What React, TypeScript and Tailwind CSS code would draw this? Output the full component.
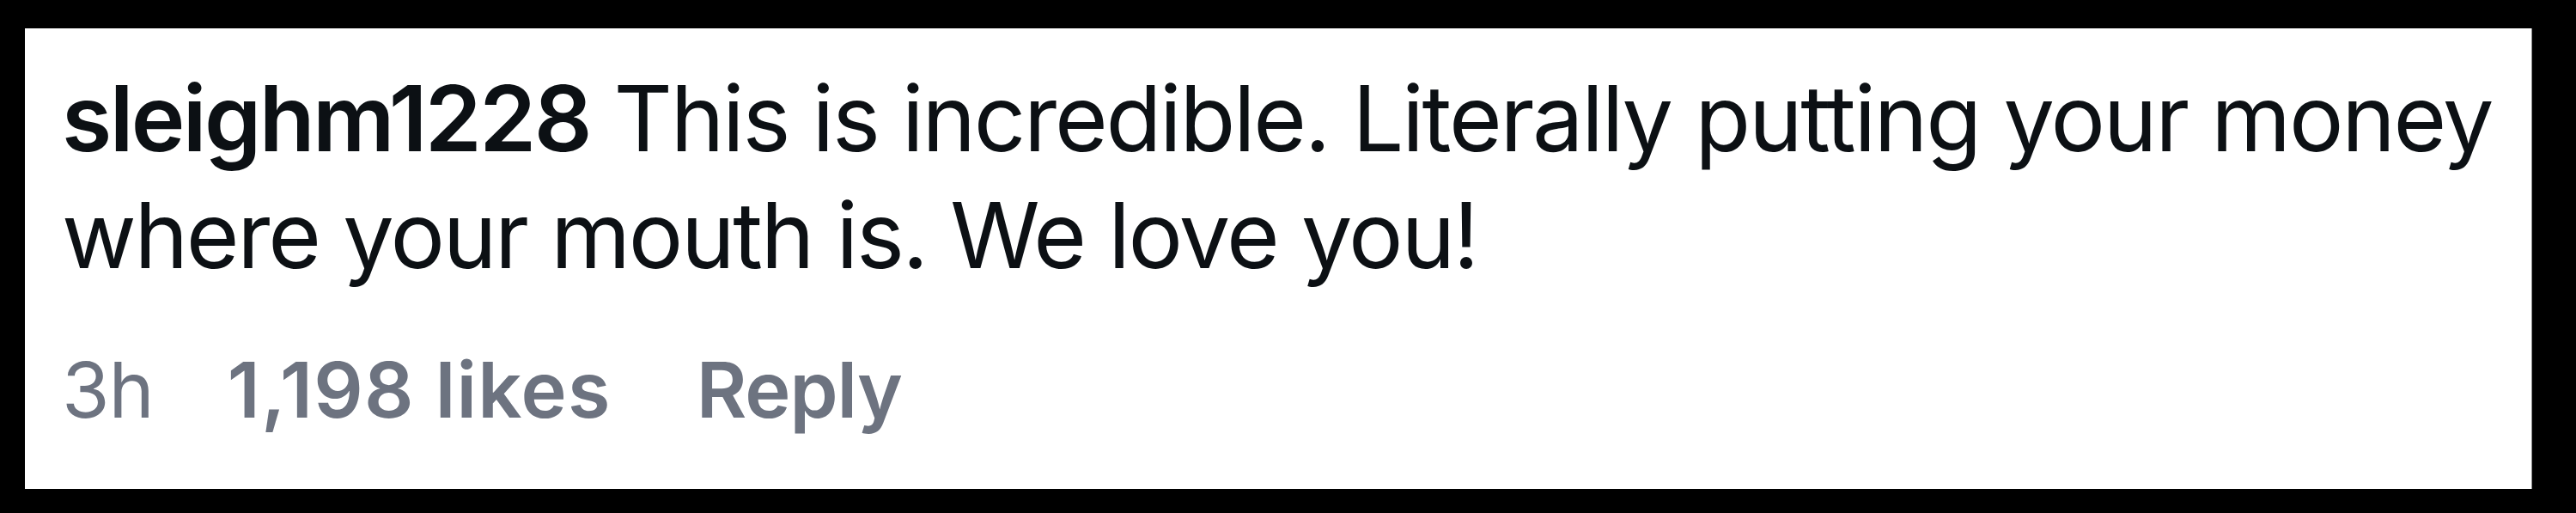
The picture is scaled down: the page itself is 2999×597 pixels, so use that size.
const App = () => {
  const comment = {
    user: 'sleighm1228',
    text: 'This is incredible. Literally putting your money where your mouth is. We love you!',
    time: '3h',
    likes: '1,198 likes',
  };

  return (
    <div className="min-h-screen w-full bg-black pt-[33px] pl-[29px]">
      <div className="w-[2919px] h-[536px] bg-white border-r border-[#8a8a8a] pl-[43px] pr-[10px] pt-[37px] font-['Inter',sans-serif]">
        {/* Comment body */}
        <p className="text-[106px] leading-[136px] text-[#0c1014] tracking-[-2.3px]">
          <span className="font-semibold tracking-[-2.6px]">{comment.user}</span> {comment.text}
        </p>

        {/* Meta row */}
        <div className="mt-[52px] flex items-center text-[90px] leading-[120px] text-[#6d7380]">
          <span className="tracking-[-1px] mr-[86px]">{comment.time}</span>
          <span className="font-semibold tracking-[1.2px] mr-[99px]">{comment.likes}</span>
          <span className="font-semibold tracking-[-1px]">Reply</span>
        </div>
      </div>
    </div>
  );
};

export default App;
